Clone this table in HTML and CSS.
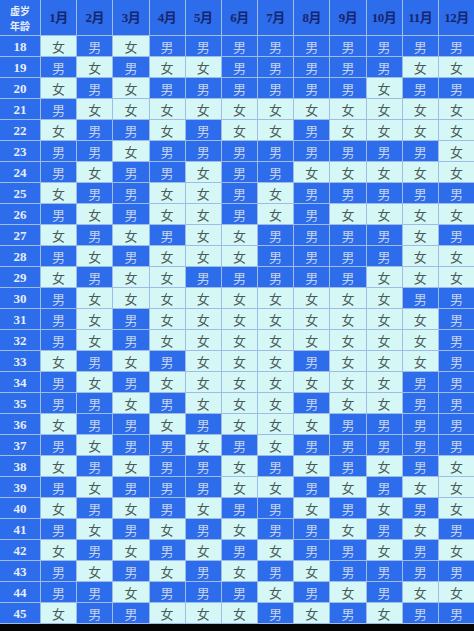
FILE: index.html
```html
<!DOCTYPE html>
<html lang="zh">
<head>
<meta charset="utf-8">
<link rel="stylesheet" href="styles.css">
</head>
<body>
<div class="chart">
<div class="h age"><span>虚岁</span><span>年龄</span></div><div class="h">1月</div><div class="h">2月</div><div class="h">3月</div><div class="h">4月</div><div class="h">5月</div><div class="h">6月</div><div class="h">7月</div><div class="h">8月</div><div class="h">9月</div><div class="h">10月</div><div class="h">11月</div><div class="h">12月</div>
<div class="n">18</div><div class="f">女</div><div class="m">男</div><div class="f">女</div><div class="m">男</div><div class="m">男</div><div class="m">男</div><div class="m">男</div><div class="m">男</div><div class="m">男</div><div class="m">男</div><div class="m">男</div><div class="m">男</div>
<div class="n">19</div><div class="m">男</div><div class="f">女</div><div class="m">男</div><div class="f">女</div><div class="f">女</div><div class="m">男</div><div class="m">男</div><div class="m">男</div><div class="m">男</div><div class="m">男</div><div class="f">女</div><div class="f">女</div>
<div class="n">20</div><div class="f">女</div><div class="m">男</div><div class="f">女</div><div class="m">男</div><div class="m">男</div><div class="m">男</div><div class="m">男</div><div class="m">男</div><div class="m">男</div><div class="f">女</div><div class="m">男</div><div class="m">男</div>
<div class="n">21</div><div class="m">男</div><div class="f">女</div><div class="f">女</div><div class="f">女</div><div class="f">女</div><div class="f">女</div><div class="f">女</div><div class="f">女</div><div class="f">女</div><div class="f">女</div><div class="f">女</div><div class="f">女</div>
<div class="n">22</div><div class="f">女</div><div class="m">男</div><div class="m">男</div><div class="f">女</div><div class="m">男</div><div class="f">女</div><div class="f">女</div><div class="m">男</div><div class="f">女</div><div class="f">女</div><div class="f">女</div><div class="f">女</div>
<div class="n">23</div><div class="m">男</div><div class="m">男</div><div class="f">女</div><div class="m">男</div><div class="m">男</div><div class="m">男</div><div class="m">男</div><div class="m">男</div><div class="m">男</div><div class="m">男</div><div class="m">男</div><div class="f">女</div>
<div class="n">24</div><div class="m">男</div><div class="f">女</div><div class="m">男</div><div class="m">男</div><div class="f">女</div><div class="m">男</div><div class="m">男</div><div class="f">女</div><div class="f">女</div><div class="f">女</div><div class="f">女</div><div class="f">女</div>
<div class="n">25</div><div class="f">女</div><div class="m">男</div><div class="m">男</div><div class="f">女</div><div class="f">女</div><div class="m">男</div><div class="f">女</div><div class="m">男</div><div class="m">男</div><div class="m">男</div><div class="m">男</div><div class="m">男</div>
<div class="n">26</div><div class="m">男</div><div class="f">女</div><div class="m">男</div><div class="f">女</div><div class="f">女</div><div class="m">男</div><div class="f">女</div><div class="m">男</div><div class="f">女</div><div class="f">女</div><div class="f">女</div><div class="f">女</div>
<div class="n">27</div><div class="f">女</div><div class="m">男</div><div class="f">女</div><div class="m">男</div><div class="f">女</div><div class="f">女</div><div class="m">男</div><div class="m">男</div><div class="m">男</div><div class="m">男</div><div class="f">女</div><div class="m">男</div>
<div class="n">28</div><div class="m">男</div><div class="f">女</div><div class="m">男</div><div class="f">女</div><div class="f">女</div><div class="f">女</div><div class="m">男</div><div class="m">男</div><div class="m">男</div><div class="m">男</div><div class="f">女</div><div class="f">女</div>
<div class="n">29</div><div class="f">女</div><div class="m">男</div><div class="f">女</div><div class="f">女</div><div class="m">男</div><div class="m">男</div><div class="m">男</div><div class="m">男</div><div class="m">男</div><div class="f">女</div><div class="f">女</div><div class="f">女</div>
<div class="n">30</div><div class="m">男</div><div class="f">女</div><div class="f">女</div><div class="f">女</div><div class="f">女</div><div class="f">女</div><div class="f">女</div><div class="f">女</div><div class="f">女</div><div class="f">女</div><div class="m">男</div><div class="m">男</div>
<div class="n">31</div><div class="m">男</div><div class="f">女</div><div class="m">男</div><div class="f">女</div><div class="f">女</div><div class="f">女</div><div class="f">女</div><div class="f">女</div><div class="f">女</div><div class="f">女</div><div class="f">女</div><div class="m">男</div>
<div class="n">32</div><div class="m">男</div><div class="f">女</div><div class="m">男</div><div class="f">女</div><div class="f">女</div><div class="f">女</div><div class="f">女</div><div class="f">女</div><div class="f">女</div><div class="f">女</div><div class="f">女</div><div class="m">男</div>
<div class="n">33</div><div class="f">女</div><div class="m">男</div><div class="f">女</div><div class="m">男</div><div class="f">女</div><div class="f">女</div><div class="f">女</div><div class="m">男</div><div class="f">女</div><div class="f">女</div><div class="f">女</div><div class="m">男</div>
<div class="n">34</div><div class="m">男</div><div class="f">女</div><div class="m">男</div><div class="f">女</div><div class="f">女</div><div class="f">女</div><div class="f">女</div><div class="f">女</div><div class="f">女</div><div class="f">女</div><div class="m">男</div><div class="m">男</div>
<div class="n">35</div><div class="m">男</div><div class="m">男</div><div class="f">女</div><div class="m">男</div><div class="f">女</div><div class="f">女</div><div class="f">女</div><div class="m">男</div><div class="f">女</div><div class="f">女</div><div class="m">男</div><div class="m">男</div>
<div class="n">36</div><div class="f">女</div><div class="m">男</div><div class="m">男</div><div class="f">女</div><div class="m">男</div><div class="f">女</div><div class="f">女</div><div class="f">女</div><div class="m">男</div><div class="m">男</div><div class="m">男</div><div class="m">男</div>
<div class="n">37</div><div class="m">男</div><div class="f">女</div><div class="m">男</div><div class="m">男</div><div class="f">女</div><div class="m">男</div><div class="f">女</div><div class="m">男</div><div class="m">男</div><div class="m">男</div><div class="m">男</div><div class="m">男</div>
<div class="n">38</div><div class="f">女</div><div class="m">男</div><div class="f">女</div><div class="m">男</div><div class="m">男</div><div class="f">女</div><div class="m">男</div><div class="f">女</div><div class="m">男</div><div class="f">女</div><div class="m">男</div><div class="f">女</div>
<div class="n">39</div><div class="m">男</div><div class="f">女</div><div class="m">男</div><div class="m">男</div><div class="m">男</div><div class="f">女</div><div class="f">女</div><div class="m">男</div><div class="f">女</div><div class="m">男</div><div class="f">女</div><div class="f">女</div>
<div class="n">40</div><div class="f">女</div><div class="m">男</div><div class="f">女</div><div class="m">男</div><div class="f">女</div><div class="m">男</div><div class="m">男</div><div class="f">女</div><div class="m">男</div><div class="f">女</div><div class="m">男</div><div class="f">女</div>
<div class="n">41</div><div class="m">男</div><div class="f">女</div><div class="m">男</div><div class="f">女</div><div class="m">男</div><div class="f">女</div><div class="m">男</div><div class="m">男</div><div class="f">女</div><div class="m">男</div><div class="f">女</div><div class="m">男</div>
<div class="n">42</div><div class="f">女</div><div class="m">男</div><div class="f">女</div><div class="m">男</div><div class="f">女</div><div class="m">男</div><div class="f">女</div><div class="m">男</div><div class="m">男</div><div class="f">女</div><div class="m">男</div><div class="f">女</div>
<div class="n">43</div><div class="m">男</div><div class="f">女</div><div class="m">男</div><div class="f">女</div><div class="m">男</div><div class="f">女</div><div class="m">男</div><div class="f">女</div><div class="m">男</div><div class="m">男</div><div class="m">男</div><div class="m">男</div>
<div class="n">44</div><div class="m">男</div><div class="m">男</div><div class="f">女</div><div class="m">男</div><div class="m">男</div><div class="m">男</div><div class="f">女</div><div class="m">男</div><div class="f">女</div><div class="m">男</div><div class="f">女</div><div class="f">女</div>
<div class="n">45</div><div class="f">女</div><div class="m">男</div><div class="m">男</div><div class="f">女</div><div class="f">女</div><div class="f">女</div><div class="m">男</div><div class="f">女</div><div class="m">男</div><div class="f">女</div><div class="m">男</div><div class="m">男</div>
</div>
</body>
</html>
```
FILE: styles.css
```css
html, body {
  margin: 0;
  padding: 0;
  background: #050505;
}
body {
  width: 474px;
  height: 631px;
  overflow: hidden;
}
.chart {
  display: grid;
  grid-template-columns: 40px repeat(12, 1fr);
  grid-template-rows: 35px repeat(28, 20px);
  gap: 1px;
  background: #9fbce8;
  border-bottom: 1px solid #9fbce8;
  width: 474px;
  font-family: "Noto Sans CJK SC", "Noto Sans", sans-serif;
}
.chart > div {
  display: flex;
  align-items: center;
  justify-content: center;
  font-size: 13px;
  line-height: 1;
}
.h {
  background: #2d6cea;
  color: #16266e;
  font-family: "Liberation Serif", "Noto Sans CJK SC", serif;
  font-weight: bold;
  font-size: 12px;
  letter-spacing: -0.5px;
}
.chart > .h.age {
  flex-direction: column;
  color: #e8eefc;
  font-family: "Noto Sans CJK SC", sans-serif;
  font-size: 10px;
  letter-spacing: 0;
}
.age span {
  display: block;
  line-height: 15px;
}
.n {
  background: #2d6cea;
  color: #e6edfb;
  font-family: "Liberation Serif", serif;
  font-weight: bold;
  font-size: 12px;
}
.m {
  background: #2d6cea;
  color: #c3d2ee;
}
.f {
  background: #d5f8f6;
  color: #4a5a58;
}
```
